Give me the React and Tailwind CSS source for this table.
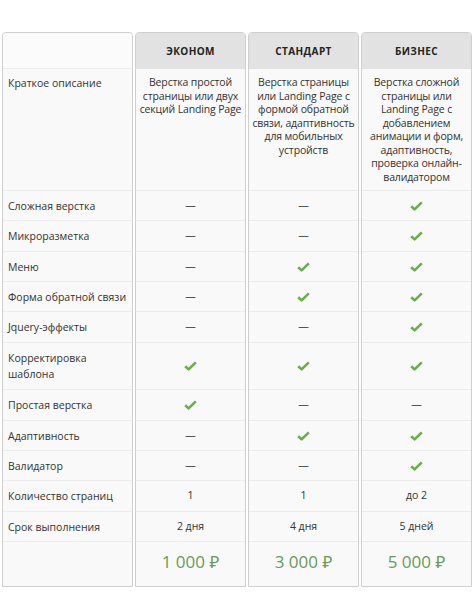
import React from "react";

const heights = [122, 30, 31, 30, 30, 31, 47, 31, 30, 30, 31, 30, 44];

const labels = [
  "Краткое описание",
  "Сложная верстка",
  "Микроразметка",
  "Меню",
  "Форма обратной связи",
  "Jquery-эффекты",
  "Корректировка шаблона",
  "Простая верстка",
  "Адаптивность",
  "Валидатор",
  "Количество страниц",
  "Срок выполнения",
  "",
];

const Y = "check";
const N = "dash";

const plans = [
  {
    name: "Эконом",
    desc: "Верстка простой страницы или двух секций Landing Page",
    cells: [N, N, N, N, N, Y, Y, N, N, "1", "2 дня"],
    price: "1 000 ₽",
  },
  {
    name: "Стандарт",
    desc: "Верстка страницы или Landing Page с формой обратной связи, адаптивность для мобильных устройств",
    cells: [N, N, Y, Y, N, Y, N, Y, N, "1", "4 дня"],
    price: "3 000 ₽",
  },
  {
    name: "Бизнес",
    desc: "Верстка сложной страницы или Landing Page с добавлением анимации и форм, адаптивность, проверка онлайн-валидатором",
    cells: [Y, Y, Y, Y, Y, Y, N, Y, Y, "до 2", "5 дней"],
    price: "5 000 ₽",
  },
];

const Check = () => (
  <svg width="13" height="10" viewBox="0 0 13 10">
    <path d="M1.2 5.2 L4.6 8.4 L11.8 1.4" fill="none" stroke="#6aae4c" strokeWidth="2.6" strokeLinejoin="round" />
  </svg>
);

const Cell = ({ v }) => {
  if (v === Y) return <Check />;
  if (v === N) return <span className="text-[#555]">—</span>;
  return <span>{v}</span>;
};

export default function App() {
  return (
    <div
      className="w-[473px] h-[597px] bg-white pt-[32px] pl-[2px] flex gap-[2px] text-[10.5px] text-[#333]"
      style={{ fontFamily: '"Open Sans", "Noto Sans", sans-serif' }}
    >
      <div className="w-[131px] border border-[#cfcfcf] rounded-t-[4px] bg-[#f9f9f9] flex flex-col self-start">
        <div className="h-[36px] bg-[#fbfbfb] rounded-t-[4px] border-b border-[#ececec]" />
        {labels.map((l, i) => (
          <div
            key={i}
            style={{ height: heights[i] }}
            className={`px-[5px] flex leading-[16px] ${i === 0 ? "items-start pt-[6px]" : "items-center"} ${i < labels.length - 1 ? "border-b border-[#ececec]" : ""}`}
          >
            {i === 6 ? (
              <span>Корректировка<br />шаблона</span>
            ) : (
              l
            )}
          </div>
        ))}
      </div>
      {plans.map((p) => (
        <div key={p.name} className="w-[111px] border border-[#cfcfcf] rounded-t-[4px] bg-[#f9f9f9] flex flex-col self-start">
          <div className="h-[36px] bg-[#e2e2e2] rounded-t-[3px] flex items-center justify-center font-bold uppercase tracking-[0.4px] text-[#222] text-[10px]">
            {p.name}
          </div>
          <div
            style={{ height: heights[0] }}
            className="px-[1px] pt-[7px] text-center leading-[13.5px] tracking-[-0.15px] border-b border-[#ececec]"
          >
            {p.desc}
          </div>
          {p.cells.map((c, i) => (
            <div
              key={i}
              style={{ height: heights[i + 1] }}
              className="flex items-center justify-center border-b border-[#ececec]"
            >
              <Cell v={c} />
            </div>
          ))}
          <div
            style={{ height: heights[12] }}
            className="flex items-center justify-center text-[17px] text-[#6a9a5a] pb-[4px]"
          >
            {p.price}
          </div>
        </div>
      ))}
    </div>
  );
}
